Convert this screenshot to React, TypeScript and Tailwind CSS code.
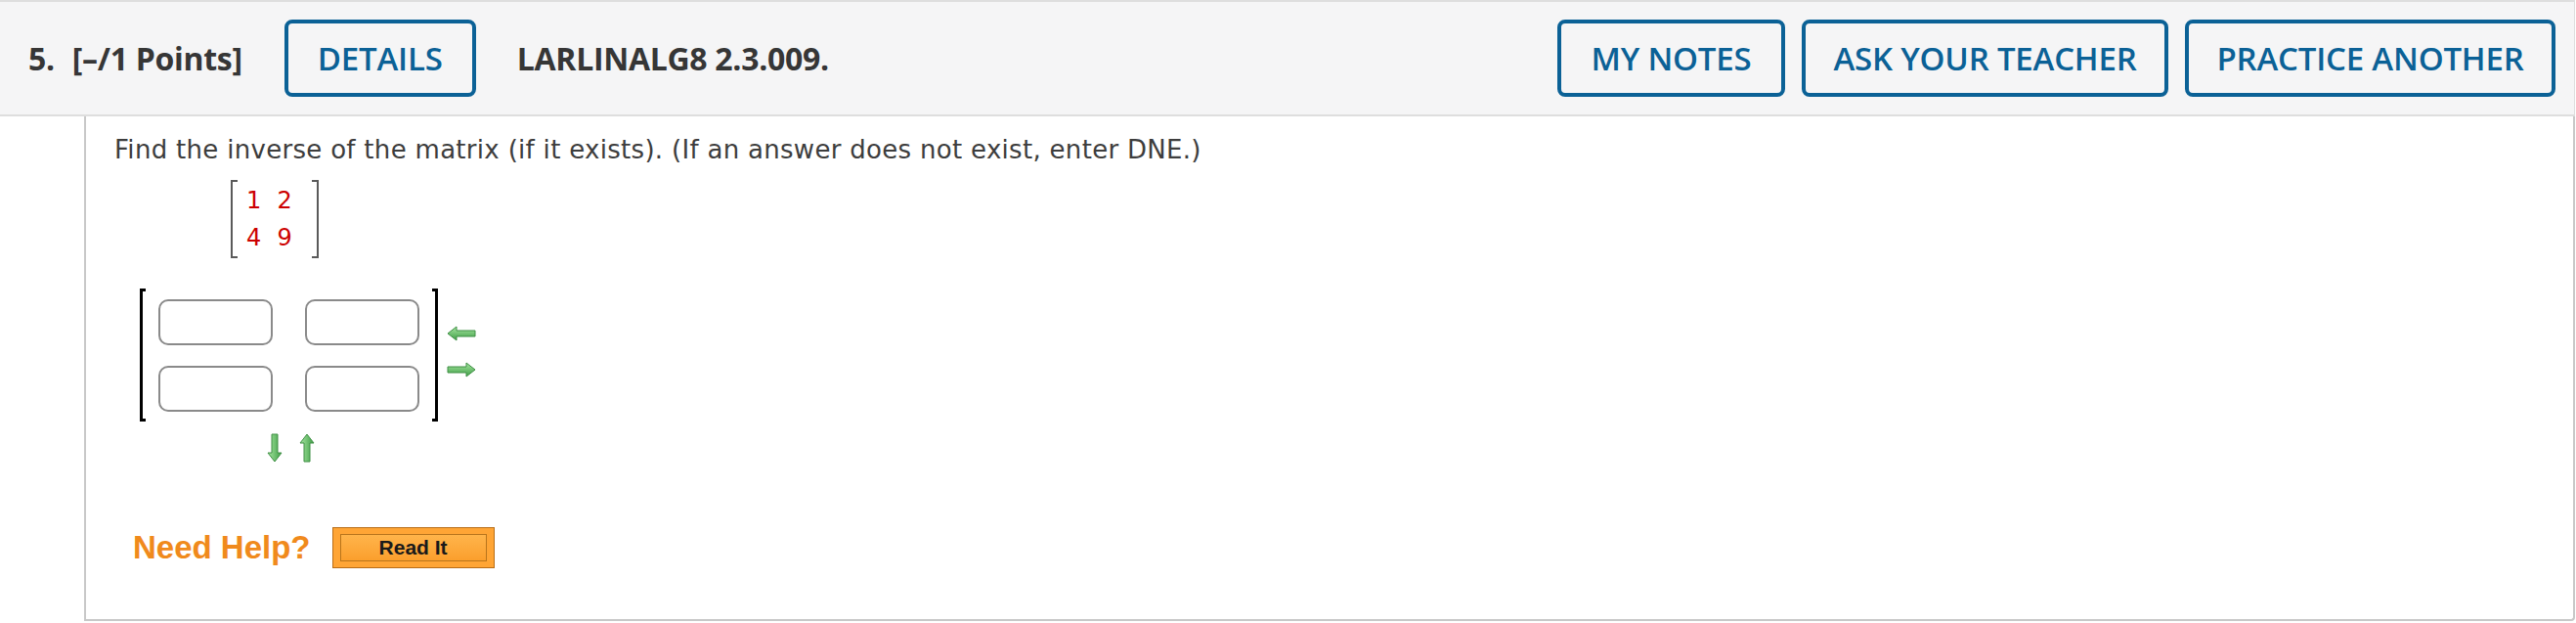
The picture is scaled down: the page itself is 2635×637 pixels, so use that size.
import React from "react";

const openSans = { fontFamily: '"Open Sans", "Noto Sans", sans-serif' };

function HeaderButton({ label, width }: { label: string; width: string }) {
  return (
    <button
      className={`${width} h-[79px] flex items-center justify-center rounded-[8px] border-[4px] border-[#0b6196] text-[#0b6196] text-[33px] font-semibold tracking-[-0.2px]`}
      style={openSans}
    >
      {label}
    </button>
  );
}

function HArrow({ dir }: { dir: "left" | "right" }) {
  const d =
    dir === "left"
      ? "M1 8 L10 1 L10 5 L29 5 L29 11 L10 11 L10 15 Z"
      : "M29 8 L20 1 L20 5 L1 5 L1 11 L20 11 L20 15 Z";
  return (
    <svg width="30" height="16" viewBox="0 0 30 16">
      <defs>
        <linearGradient id={`hg-${dir}`} x1="0" y1="0" x2="0" y2="1">
          <stop offset="0" stopColor="#a6e6a0" />
          <stop offset="1" stopColor="#3f9e46" />
        </linearGradient>
      </defs>
      <path d={d} fill={`url(#hg-${dir})`} stroke="#3e8f44" strokeWidth="1" strokeLinejoin="round" />
    </svg>
  );
}

function VArrow({ dir }: { dir: "up" | "down" }) {
  const d =
    dir === "down"
      ? "M8 29 L1 20 L5 20 L5 1 L11 1 L11 20 L15 20 Z"
      : "M8 1 L1 10 L5 10 L5 29 L11 29 L11 10 L15 10 Z";
  return (
    <svg width="16" height="30" viewBox="0 0 16 30">
      <defs>
        <linearGradient id={`vg-${dir}`} x1="0" y1="0" x2="1" y2="0">
          <stop offset="0" stopColor="#a6e6a0" />
          <stop offset="1" stopColor="#3f9e46" />
        </linearGradient>
      </defs>
      <path d={d} fill={`url(#vg-${dir})`} stroke="#3e8f44" strokeWidth="1" strokeLinejoin="round" />
    </svg>
  );
}

function AnswerBox() {
  return <div className="w-[117px] h-[47px] rounded-[10px] border-2 border-[#8a8a8a] bg-white" />;
}

export default function App() {
  return (
    <div className="w-[2635px] h-[637px] bg-white overflow-hidden">
      {/* question header */}
      <div className="w-[2634px] h-[119px] flex items-center bg-[#f5f5f6] border-t-2 border-b-2 border-r border-[#dedede] text-[#363636]">
        <span className="ml-[29px] text-[32px] font-bold tracking-[-0.3px]" style={openSans}>
          5.
        </span>
        <span className="ml-[18px] text-[32px] font-bold tracking-[-0.3px]" style={openSans}>
          [–/1 Points]
        </span>
        <div className="ml-[43px]">
          <HeaderButton label="DETAILS" width="w-[196px]" />
        </div>
        <span className="ml-[42px] text-[32px] font-bold tracking-[-0.3px]" style={openSans}>
          LARLINALG8 2.3.009.
        </span>
        <div className="ml-auto mr-[19px] flex gap-[17px]">
          <HeaderButton label="MY NOTES" width="w-[233px]" />
          <HeaderButton label="ASK YOUR TEACHER" width="w-[375px]" />
          <HeaderButton label="PRACTICE ANOTHER" width="w-[379px]" />
        </div>
      </div>

      {/* question body */}
      <div className="ml-[86px] w-[2548px] h-[516px] border-2 border-t-0 border-[#c8c8c8] rounded-br-[4px] pl-[29px] pt-[19px]">
        <p
          className="text-[26px] leading-[30px] tracking-[0.3px] text-[#3d3d3d]"
          style={{ fontFamily: '"DejaVu Sans", Verdana, sans-serif' }}
        >
          Find the inverse of the matrix (if it exists). (If an answer does not exist, enter DNE.)
        </p>

        {/* given matrix */}
        <div
          className="ml-[119px] mt-[16px] flex h-[80px] w-[90px]"
          style={{ fontFamily: '"DejaVu Sans", Verdana, sans-serif' }}
        >
          <div className="w-[7px] border-2 border-r-0 border-[#5a5a5a]" />
          <div className="flex-1 grid grid-cols-2 content-center gap-y-[12px] pl-[9px] pr-[4px] text-[24px] leading-[26px] text-[#cc0000]">
            <span>1</span>
            <span>2</span>
            <span>4</span>
            <span>9</span>
          </div>
          <div className="w-[7px] border-2 border-l-0 border-[#5a5a5a]" />
        </div>

        {/* answer matrix */}
        <div className="ml-[26px] mt-[31px] flex items-center">
          <div className="flex h-[136px]">
            <div className="w-[6px] border-[3px] border-r-0 border-black" />
            <div className="grid grid-cols-2 content-center gap-x-[33px] gap-y-[21px] px-[13px]">
              <AnswerBox />
              <AnswerBox />
              <AnswerBox />
              <AnswerBox />
            </div>
            <div className="w-[6px] border-[3px] border-l-0 border-black" />
          </div>
          <div className="ml-[9px] mt-[-7px] flex flex-col gap-[21px]">
            <HArrow dir="left" />
            <HArrow dir="right" />
          </div>
        </div>
        <div className="ml-[156px] mt-[12px] flex gap-[17px]">
          <VArrow dir="down" />
          <VArrow dir="up" />
        </div>

        {/* help */}
        <div className="ml-[19px] mt-[62px] flex items-center" style={{ fontFamily: '"Liberation Sans", Arial, sans-serif' }}>
          <span className="text-[33px] font-bold text-[#f08a1c]">Need Help?</span>
          <button className="ml-[22px] w-[166px] h-[42px] border border-[#b96d16] bg-[#ffa535] px-[7px] py-[6px]">
            <span className="flex h-full w-full items-center justify-center border border-[#b8741c] bg-gradient-to-b from-[#ffb44a] to-[#fb9f2c] text-[21px] font-bold text-[#1a1a1a]">
              Read It
            </span>
          </button>
        </div>
      </div>
    </div>
  );
}
